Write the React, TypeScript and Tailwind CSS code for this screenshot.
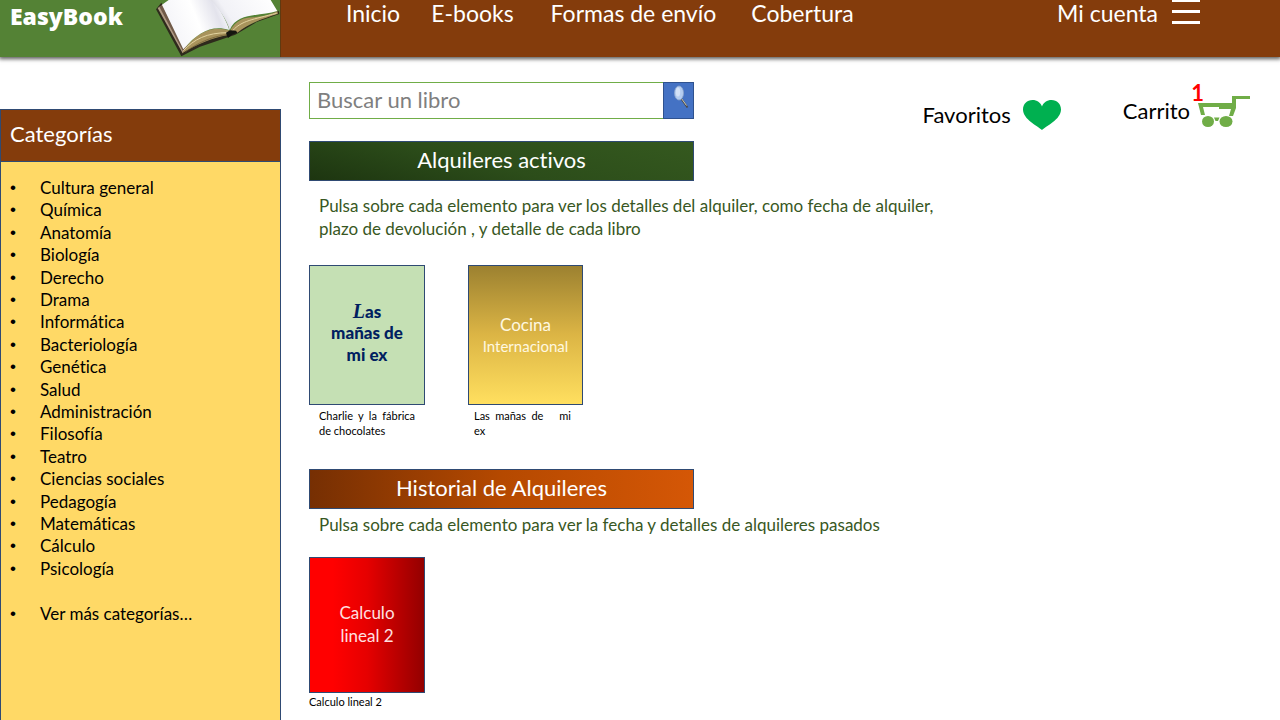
const navLinks = ["Inicio", "E-books", "Formas de envío", "Cobertura"];

const categories = [
  "Cultura general",
  "Química",
  "Anatomía",
  "Biología",
  "Derecho",
  "Drama",
  "Informática",
  "Bacteriología",
  "Genética",
  "Salud",
  "Administración",
  "Filosofía",
  "Teatro",
  "Ciencias sociales",
  "Pedagogía",
  "Matemáticas",
  "Cálculo",
  "Psicología",
];

function BookLogo() {
  return (
    <svg viewBox="465 0 375 171" className="h-[57px] w-[125px] shrink-0" aria-hidden="true">
      <defs>
        <linearGradient id="pageLeft" x1="0" y1="0.3" x2="1" y2="0">
          <stop offset="0" stopColor="#f4f4f8" />
          <stop offset="0.45" stopColor="#ffffff" />
          <stop offset="0.75" stopColor="#e3e3ec" />
          <stop offset="0.9" stopColor="#fafafd" />
          <stop offset="1" stopColor="#c4c4d2" />
        </linearGradient>
        <linearGradient id="pageRight" x1="0" y1="0.5" x2="1" y2="0.2">
          <stop offset="0" stopColor="#c9c9d6" />
          <stop offset="0.25" stopColor="#f2f2f7" />
          <stop offset="1" stopColor="#ffffff" />
        </linearGradient>
      </defs>
      <path d="M468 28 L484 8 L560 140 L682 96 L712 92 L836 32 L838 42 L770 66 L706 104 L684 112 L600 140 L544 169 Z" fill="#2e2a1c" />
      <path d="M473 24 L498 8 L566 128 L548 160 Z" fill="#b09a84" />
      <path d="M478 20 L486 15 L556 142 L550 156 Z" fill="#705a48" />
      <path d="M546 160 C570 118 610 88 648 86 C668 86 680 88 690 92 L682 106 C640 112 590 134 546 160Z" fill="#a8935c" />
      <path d="M550 152 C582 118 620 98 684 98" stroke="#e2d3a0" strokeWidth="3" fill="none" />
      <path d="M556 156 C590 130 634 110 680 104" stroke="#6b5b33" strokeWidth="2" fill="none" />
      <path d="M690 92 C708 62 730 52 760 52 C790 50 815 42 832 34 L834 41 C790 56 752 66 712 98Z" fill="#a8935c" />
      <path d="M698 92 C724 62 760 58 830 40" stroke="#e2d3a0" strokeWidth="3" fill="none" />
      <path d="M486 14 L506 0 L640 0 C660 30 678 58 688 90 C640 74 596 92 550 148 Z" fill="url(#pageLeft)" />
      <path d="M632 0 L812 0 L832 33 C780 50 712 36 689 90 C680 58 656 26 632 0Z" fill="url(#pageRight)" />
      <path d="M678 98 L690 91 L708 92 L712 98 L696 104 L684 114 L680 106Z" fill="#15150f" />
    </svg>
  );
}

function MagnifierIcon() {
  return (
    <svg viewBox="0 0 20 26" className="h-[26px] w-5" aria-hidden="true">
      <path d="M10.500 14 L16.500 22.500" stroke="#4a4a4a" strokeWidth="1.800" />
      <path d="M10.500 13.500 L15.500 20.500" stroke="#c9c9b8" strokeWidth="1" />
      <ellipse cx="8" cy="8" rx="4.500" ry="7" fill="#b4cdf0" stroke="#8ea6cc" strokeWidth="0.800" />
      <ellipse cx="7" cy="7" rx="2.200" ry="4.500" fill="#d3e2f7" />
    </svg>
  );
}

function HeartIcon() {
  return (
    <svg viewBox="0 0 38 30" className="h-[30px] w-[38px]" aria-hidden="true">
      <path
        d="M19 30 C15 26 0 19.500 0 9.500 C0 4 4 0 9.500 0 C14 0 17.500 2.500 19 6.500 C20.500 2.500 24 0 28.500 0 C34 0 38 4 38 9.500 C38 19.500 23 26 19 30Z"
        fill="#00b050"
      />
    </svg>
  );
}

function CartIcon() {
  return (
    <svg viewBox="0 0 52 32" className="h-8 w-[52px]" aria-hidden="true">
      <g fill="#70ad47">
        <path d="M0 7 H34 V0 H52 V3 H38 V12 L35 20 H31 L33 13 H21 V11 H5 L7 19 H3Z" />
        <ellipse cx="10" cy="25.500" rx="6" ry="5.500" />
        <ellipse cx="28" cy="25.500" rx="6.500" ry="5.500" />
        <path d="M16 21.500 H21.500 L20 25 H17.500Z" />
      </g>
    </svg>
  );
}

function SectionBanner({ id, title, fill }: { id: string; title: string; fill: string }) {
  return (
    <h2
      id={id}
      className={`flex h-10 w-full max-w-[385px] items-center justify-center border border-[#2f4a73] pb-0.5 text-[22px] leading-7 text-white ${fill}`}
    >
      {title}
    </h2>
  );
}

function Bullet() {
  return (
    <span aria-hidden="true" className="w-[30px] font-['Liberation_Sans',sans-serif]">
      •
    </span>
  );
}

export default function App() {
  return (
    <div className="flex min-h-screen flex-col bg-white font-['Lato',sans-serif] text-black [font-variant-ligatures:none]">
      <header className="relative z-10 flex h-[57px] bg-[#843c0c] text-white shadow-[0_1px_4px_1px_rgba(0,0,0,0.65)]">
        <a
          href="#inicio"
          className="flex w-[281px] shrink-0 items-start justify-between border-r border-[#5f3a10] bg-[#548235] pl-2.5"
        >
          <span className="font-['Open_Sans',sans-serif] text-[23px] leading-8 font-extrabold">EasyBook</span>
          <BookLogo />
        </a>
        <div className="flex flex-1 items-start justify-between pr-20 pl-[65px] text-[23px] leading-[26px]">
          <nav aria-label="Principal" className="flex gap-[31px]">
            {navLinks.map((link) => (
              <a key={link} href="#inicio" className="last:ml-1 nth-3:ml-1.5">
                {link}
              </a>
            ))}
          </nav>
          <div className="flex gap-3.5">
            <a href="#cuenta">Mi cuenta</a>
            <button type="button" aria-label="Abrir menú" className="flex h-6 w-7 flex-col justify-between">
              <span className="h-0.5 w-full bg-white" />
              <span className="h-[3px] w-full bg-white" />
              <span className="h-[3px] w-full bg-white" />
            </button>
          </div>
        </div>
      </header>

      <div className="flex flex-1">
        <aside className="mt-[52px] flex w-[281px] shrink-0 flex-col border border-b-0 border-[#2f4a73] bg-[#ffd966]">
          <h2 className="flex h-[52px] items-center border-b border-[#2f4a73] bg-[#843c0c] pb-1 pl-[9px] text-[22px] leading-7 text-white">
            Categorías
          </h2>
          <ul className="mt-[15px] grid h-[448px] grid-rows-20 pl-[9px] text-[17px] leading-[22px]">
            {categories.map((category) => (
              <li key={category} className="flex">
                <Bullet />
                <a href="#categoria">{category}</a>
              </li>
            ))}
            <li className="row-start-20 flex">
              <Bullet />
              <a href="#categorias">Ver más categorías…</a>
            </li>
          </ul>
        </aside>

        <main className="flex-1 pt-[25px] pr-[30px] pl-7">
          <div className="flex items-start justify-between">
            <form role="search" className="flex h-[37px] w-full max-w-[385px]">
              <input
                type="search"
                aria-label="Buscar un libro"
                placeholder="Buscar un libro"
                className="min-w-0 flex-1 border border-r-0 border-[#70ad47] px-[7px] pb-0.5 text-[22px] leading-7 outline-none placeholder:text-[#7f7f7f]"
              />
              <button
                type="submit"
                aria-label="Buscar"
                className="flex w-[31px] justify-center border border-[#2f528f] bg-[#4472c4] pt-0.5 pl-1"
              >
                <MagnifierIcon />
              </button>
            </form>
            <div className="flex h-7 gap-[62px] pt-3.5 text-[22px] leading-[30px]">
              <a href="#favoritos" className="flex items-start gap-3 pt-1">
                Favoritos
                <HeartIcon />
              </a>
              <a href="#carrito" className="relative flex items-start gap-2">
                Carrito
                <CartIcon />
                <span className="absolute -top-[18px] right-[46px] font-bold text-[#ff0000]">1</span>
              </a>
            </div>
          </div>

          <section aria-labelledby="activos" className="mt-[22px]">
            <SectionBanner
              id="activos"
              title="Alquileres activos"
              fill="bg-[linear-gradient(15deg,#1d3510_0%,#2c4d1a_45%,#35591f_100%)]"
            />
            <p className="mt-[13px] max-w-[660px] pl-2.5 text-[17px] leading-[23px] text-[#385723]">
              Pulsa sobre cada elemento para ver los detalles del alquiler, como fecha de alquiler, plazo de devolución , y
              detalle de cada libro
            </p>
            <div className="mt-[25px] flex gap-[43px]">
              <article className="w-[116px]">
                <a
                  href="#libro"
                  className="flex h-[140px] flex-col items-center justify-center border border-[#2f4a73] bg-[#c5e0b4] pb-1 text-[17px] leading-[22px] font-black text-[#002060]"
                >
                  <span className="block h-[22px] first-letter:font-['Liberation_Serif',serif] first-letter:text-xl first-letter:leading-[22px] first-letter:italic">
                    Las
                  </span>
                  <span>mañas de</span>
                  <span>mi ex</span>
                </a>
                <p className="mt-[3px] px-2.5 text-justify text-[11px] leading-[15px]">Charlie y la fábrica de chocolates</p>
              </article>
              <article className="w-[115px]">
                <a
                  href="#libro"
                  className="flex h-[140px] flex-col items-center justify-center border border-[#2f4a73] bg-[linear-gradient(180deg,#9c8130_0%,#dcb545_50%,#ffdf5f_100%)] text-center text-[17px] leading-[22px] text-[#fff8e0]"
                >
                  Cocina
                  <span className="text-[15px] leading-5">Internacional</span>
                </a>
                <p className="mt-[3px] pr-3 pl-1.5 text-justify text-[11px] leading-[15px]">Las mañas de &nbsp; mi ex</p>
              </article>
            </div>
          </section>

          <section aria-labelledby="historial" className="mt-[31px]">
            <SectionBanner
              id="historial"
              title="Historial de Alquileres"
              fill="bg-[linear-gradient(90deg,#762f03_0%,#b54900_50%,#d55706_100%)]"
            />
            <p className="mt-1 pl-2.5 text-[17px] leading-[23px] text-[#385723]">
              Pulsa sobre cada elemento para ver la fecha y detalles de alquileres pasados
            </p>
            <article className="mt-[21px] w-[116px]">
              <a
                href="#libro"
                className="flex h-[136px] items-center justify-center border border-[#2f4a73] bg-[linear-gradient(90deg,#ff0000_0%,#ff0000_20%,#e60000_50%,#930000_100%)] px-6 pb-0.5 text-center text-[17px] leading-[23px] text-[#ffe0e0]"
              >
                Calculo lineal 2
              </a>
              <p className="mt-px text-[11px] leading-[15px]">Calculo lineal 2</p>
            </article>
          </section>
        </main>
      </div>
    </div>
  );
}
